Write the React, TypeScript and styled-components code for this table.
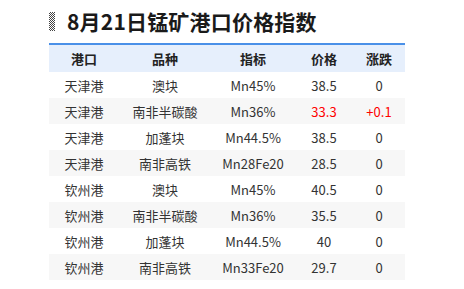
import styled, {createGlobalStyle} from 'styled-components';

const GlobalStyle = createGlobalStyle`
   html, body {
      margin: 0;
      padding: 0;
      background: #fff;
   }
   body {
      font-family: 'Noto Sans CJK SC', 'Noto Sans', sans-serif;
      color: #333;
   }
`;

const rows = [
   {port: '天津港', kind: '澳块', grade: 'Mn45%', price: '38.5', change: '0'},
   {port: '天津港', kind: '南非半碳酸', grade: 'Mn36%', price: '33.3', change: '+0.1', up: true},
   {port: '天津港', kind: '加蓬块', grade: 'Mn44.5%', price: '38.5', change: '0'},
   {port: '天津港', kind: '南非高铁', grade: 'Mn28Fe20', price: '28.5', change: '0'},
   {port: '钦州港', kind: '澳块', grade: 'Mn45%', price: '40.5', change: '0'},
   {port: '钦州港', kind: '南非半碳酸', grade: 'Mn36%', price: '35.5', change: '0'},
   {port: '钦州港', kind: '加蓬块', grade: 'Mn44.5%', price: '40', change: '0'},
   {port: '钦州港', kind: '南非高铁', grade: 'Mn33Fe20', price: '29.7', change: '0'},
];

const columns = '70px 92px 84px 58px 52px';

export default function App() {
   return (
      <Page>
         <GlobalStyle />
         <TitleRow>
            <DotBar />
            <Title>8月21日锰矿港口价格指数</Title>
         </TitleRow>
         <Table>
            <HeadRow>
               <HeadCell>港口</HeadCell>
               <HeadCell>品种</HeadCell>
               <HeadCell>指标</HeadCell>
               <HeadCell>价格</HeadCell>
               <HeadCell>涨跌</HeadCell>
            </HeadRow>
            {rows.map((row, index) => (
               <Row key={index} $striped={index % 2 === 1}>
                  <Cell>{row.port}</Cell>
                  <Cell>{row.kind}</Cell>
                  <Cell>{row.grade}</Cell>
                  <Cell $up={row.up}>{row.price}</Cell>
                  <Cell $up={row.up}>{row.change}</Cell>
               </Row>
            ))}
         </Table>
      </Page>
   );
}

const Page = styled.div`
   padding: 10px 0 0 49px;
   width: 356px;
`;

const TitleRow = styled.div`
   display: flex;
   align-items: center;
   gap: 12px;
   height: 23px;
   margin-bottom: 10px;
`;

// checkered dots, looks like a dotted bar
const DotBar = styled.div`
   width: 6px;
   height: 19px;
   background: repeating-conic-gradient(#444 0 25%, transparent 0 50%) 0 0 / 2px 2px;
`;

const Title = styled.h1`
   margin: 0;
   font-size: 21px;
   font-weight: 700;
   color: #1a1a1a;
   line-height: 23px;
   letter-spacing: 0.2px;
`;

const Table = styled.div`
   border-top: 2px solid #4a90e8;
`;

const HeadRow = styled.div`
   display: grid;
   grid-template-columns: ${columns};
   height: 27px;
   background: #e6effc;
`;

const Row = styled.div<{$striped?: boolean}>`
   display: grid;
   grid-template-columns: ${columns};
   height: 26px;
   background: ${(p) => (p.$striped ? '#f7f7f7' : '#fff')};
`;

const HeadCell = styled.div`
   display: flex;
   align-items: center;
   justify-content: center;
   font-size: 13px;
   font-weight: 700;
   color: #222;
`;

const Cell = styled.div<{$up?: boolean}>`
   display: flex;
   align-items: center;
   justify-content: center;
   font-size: 13px;
   color: ${(p) => (p.$up ? '#f00' : '#333')};
`;
